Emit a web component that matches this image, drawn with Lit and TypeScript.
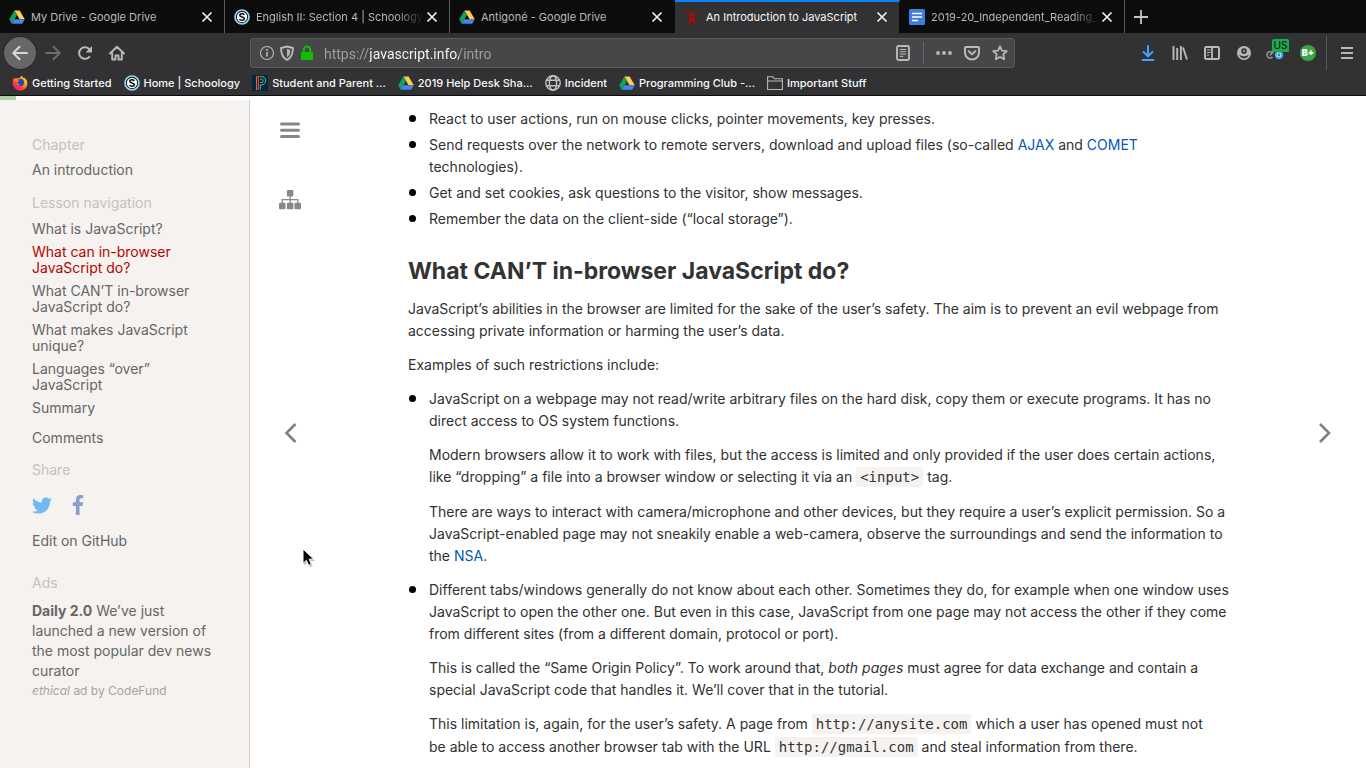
import { LitElement, html, css, svg } from "lit";
import { customElement } from "lit/decorators.js";
import { classMap } from "lit/directives/class-map.js";

const icon = (body: unknown, size = 16, box = "0 0 16 16") =>
  html`<svg width=${size} height=${size} viewBox=${box} aria-hidden="true">${body}</svg>`;

const drive = icon(svg`
  <path d="M5.4 1.5h5.2L15.8 10.300h-5.200z" fill="#ffcf48"/>
  <path d="M5.400 1.500L8 6 2.700 14.800.200 10.300z" fill="#12a15e"/>
  <path d="M5.300 10.300h10.500l-2.600 4.500H2.700z" fill="#4485f0"/>`);

const schoology = icon(svg`
  <circle cx="8" cy="8" r="7" fill="#0b0b0c" stroke="#8ed8f4" stroke-width="1.700"/>
  <circle cx="8" cy="8" r="5.200" fill="#f6f6f6"/>
  <path d="M10.300 5.800C9.800 5 9 4.700 8 4.700c-1.300 0-2.200.6-2.200 1.600 0 2.200 4.600 1.100 4.600 3.300 0 1.100-1 1.700-2.400 1.700-1.100 0-2-.4-2.500-1.300" fill="none" stroke="#0b0b0c" stroke-width="1.500"/>`);

const radio = icon(svg`
  <g fill="none" stroke="#c80000">
    <path d="M4.700 15.500L7.200 6h1.600l2.500 9.500M5.500 12.500l4.500-3M10.500 12.500l-4.500-3" stroke-width="1.100"/>
    <path d="M5.500 3.300L3 1M5 5.300L1.500 4.500M5.200 7.300L3 9.500M10.500 3.300L13 1M11 5.300l3.500-.8M10.800 7.300L13 9.500" stroke-width=".8"/>
  </g><circle cx="8" cy="5" r="1.600" fill="#e00000"/>`);

const docs = icon(svg`
  <rect width="16" height="16" rx="1.500" fill="#3f7de0"/>
  <path d="M3 4.500h10M3 8h10M3 11.500h6" stroke="#fff" stroke-width="1.700"/>`);

const firefox = icon(svg`
  <defs><linearGradient id="fx" x1="1" y1="0" x2=".2" y2="1">
    <stop offset="0" stop-color="#ffe52b"/><stop offset=".45" stop-color="#ff980e"/>
    <stop offset=".75" stop-color="#ff3647"/><stop offset="1" stop-color="#e31587"/></linearGradient></defs>
  <path d="M1.300 3.200L2.600 4.300 4 2.200l.6 1.600C6 3.200 7 3.500 8 2.500L9.500.8c1 .6 1.300 1.300 1.600 2.100l1-.4c2 1.400 3.400 3.500 3.400 6A7.300 7.300 0 0 1 8 15.700 7.300 7.300 0 0 1 .7 8.500c0-2 .2-3.800.6-5.300z" fill="url(#fx)"/>
  <path d="M6.200 4.700C7.500 3.300 10 3.300 11.300 5c1.200 1.600.9 4.300-.6 5.400-1.500 1.200-3.700.9-4.500-.1 1.300.2 2.100-.2 2.600-.8-1.500-.3-3-1-3.400-2.300l1.600-.5z" fill="#2440c4"/>`);

const powerschool = icon(svg`
  <rect width="16" height="16" fill="#06273c"/>
  <path d="M4.500 14.500v-13h1.800v13z" fill="none" stroke="#ea5a3c" stroke-width="1"/>
  <path d="M7.500 1.500h2a3.600 3.600 0 0 1 0 8.400H8.300v4.600" fill="none" stroke="#4fb9ae" stroke-width="1"/>
  <path d="M8 4h1.300a1.800 1.800 0 0 1 0 3.600H8" fill="none" stroke="#cfd65a" stroke-width=".7"/>`);

const globe = icon(svg`
  <g fill="none" stroke="#c3c3c5" stroke-width="1.400"><circle cx="8" cy="8" r="7.200"/>
  <ellipse cx="8" cy="8" rx="3.600" ry="7.200"/><path d="M1.500 5.200h13M1.500 10.800h13"/></g>`);

const folder = icon(svg`
  <path d="M.6 14.500V1.800h5.300L7.400 3.800h8v10.700zM.6 6h14.800" fill="none" stroke="#b9b9bb" stroke-width="1.100"/>`);

const line = (d: string, w = 2) =>
  icon(svg`<path d=${d} fill="none" stroke="currentColor" stroke-width=${w} stroke-linecap="round" stroke-linejoin="round"/>`);

const closeIcon = icon(svg`<path d="M1.500 1.500l9 9M10.500 1.500l-9 9" stroke="currentColor" stroke-width="1.700"/>`, 12, "0 0 12 12");

const tabs = [
  { label: "My Drive - Google Drive", icon: drive },
  { label: "English II: Section 4 | Schoology", icon: schoology, long: true },
  { label: "Antigoné - Google Drive", icon: drive },
  { label: "An Introduction to JavaScript", icon: radio, active: true },
  { label: "2019-20_Independent_Reading_", icon: docs, long: true },
];

const bookmarks = [
  { label: "Getting Started", icon: firefox },
  { label: "Home | Schoology", icon: schoology },
  { label: "Student and Parent ...", icon: powerschool },
  { label: "2019 Help Desk Sha...", icon: drive },
  { label: "Incident", icon: globe },
  { label: "Programming Club -...", icon: drive },
  { label: "Important Stuff", icon: folder },
];

const reset = css`
  * { box-sizing: border-box; }
  button { border: 0; padding: 0; margin: 0; background: none; font: inherit; color: inherit; display: flex; align-items: center; justify-content: center; }
  a { color: inherit; text-decoration: none; }
  svg { display: block; flex: none; }
`;

@customElement("browser-chrome")
export class BrowserChrome extends LitElement {
  static styles = [reset, css`
    :host { display: block; flex: none; background: #323234; color: #f9f9fa; font-family: Inter, "Liberation Sans", sans-serif; border-bottom: 1px solid #0c0c0d; }
    .tabs { display: flex; height: 33px; background: #0c0c0d; font-size: 11px; }
    .tab { display: flex; align-items: center; flex: 0 1 225px; min-width: 0; padding: 0 9px; border-right: 1px solid #5c5c5e; color: #b9b9bb; }
    .tab.active, .tab.before-active { border-right-color: transparent; }
    .tab.active { background: #323234 padding-box; border-top: 2px solid #0a84ff; padding-bottom: 2px; color: #f9f9fa; }
    .tab-label { flex: 1; min-width: 0; gap: 6px; justify-content: flex-start; }
    .tab-label span { flex: 1; text-align: left; white-space: nowrap; overflow: hidden; }
    .tab.long span { mask-image: linear-gradient(to right, #000 calc(100% - 28px), transparent); }
    .close { width: 16px; height: 16px; color: #f0f0f0; }
    .new-tab { width: 32px; color: #c4c4c6; }
    .toolbar { display: flex; align-items: center; height: 40px; padding: 0 3px 0 4px; color: #b9b9bb; }
    .tool { width: 32px; height: 32px; flex: none; }
    .back { border-radius: 50%; background: #67676a; box-shadow: 0 0 0 1px #29292b; color: #d8d8da; margin-right: 1px; }
    .forward { color: #6c6c6e; }
    .spacer { flex: 0 1 117px; }
    .url-bar { flex: 1; min-width: 0; display: flex; align-items: center; height: 30px; padding-left: 6px; background: #474749; border: 1px solid #5a5a5c; border-radius: 3px; }
    .identity { width: 20px; height: 28px; }
    .secure { color: #12bc00; }
    .url { flex: 1; min-width: 0; margin-left: 7px; padding: 2px 0 0; border: 0; outline: 0; font: 14px/20px Roboto, "Liberation Sans", sans-serif; background: linear-gradient(to right, #a0a0a3 46px, #fff 46px, #fff 135px, #a0a0a3 135px); -webkit-background-clip: text; background-clip: text; color: transparent; }
    .page-action { width: 28px; height: 28px; flex: none; }
    .divider { width: 1px; height: 22px; background: #66666a; margin: 0 6px; }
    .download { color: #45a1ff; }
    .menu-divider { width: 1px; height: 34px; background: #5a5a5c; margin: 0 4px 0 2px; }
    .bookmarks { display: flex; align-items: center; gap: 12px; height: 22px; padding: 0 12px 3px; font-size: 11px; font-weight: 500; white-space: nowrap; }
    .bookmarks a { display: flex; align-items: center; gap: 4px; }
  `];

  render() {
    return html`
      <div class="tabs" role="tablist">
        ${tabs.map((t, i) => html`
          <div class=${classMap({ tab: true, long: !!t.long, active: !!t.active, "before-active": !!tabs[i + 1]?.active })}>
            <button class="tab-label" role="tab" aria-selected=${t.active ? "true" : "false"}>${t.icon}<span>${t.label}</span></button>
            <button class="close" aria-label="Close tab">${closeIcon}</button>
          </div>`)}
        <button class="new-tab" aria-label="New tab">${icon(svg`<path d="M8 1v14M1 8h14" stroke="currentColor" stroke-width="1.800"/>`)}</button>
      </div>
      <div class="toolbar">
        <button class="tool back" aria-label="Back">${line("M15 8H1.500M7.500 1.800L1.300 8l6.200 6.200")}</button>
        <button class="tool forward" aria-label="Forward">${line("M1 8h13.500M8.500 1.800L14.700 8l-6.200 6.200")}</button>
        <button class="tool" aria-label="Reload">${icon(svg`<path d="M12.800 11.200A5.800 5.800 0 1 1 12.500 4.500" fill="none" stroke="currentColor" stroke-width="2"/><path d="M15 1v6.500H8.500z" fill="currentColor"/>`)}</button>
        <button class="tool" aria-label="Home">${icon(svg`<path d="M1 8.500L8 1.700l7 6.800M3.200 7.500v7h3.300v-4h3v4h3.300v-7" fill="none" stroke="currentColor" stroke-width="1.900" stroke-linejoin="round" stroke-linecap="round"/>`)}</button>
        <div class="spacer"></div>
        <div class="url-bar">
          <button class="identity" aria-label="Site information">${icon(svg`<circle cx="8" cy="8" r="6.500" fill="none" stroke="currentColor" stroke-width="1.100"/><path d="M8 7v4.500M8 4v1.700" stroke="currentColor" stroke-width="1.600"/>`)}</button>
          <button class="identity" aria-label="Tracking protection">${icon(svg`<path d="M8 1.500L14 3c0 5.500-1.300 9.500-6 12C3.300 12.500 2 8.500 2 3z" fill="none" stroke="currentColor" stroke-width="1.900" stroke-linejoin="round"/><path d="M8 4l3.300.9c-.1 3.500-1 5.800-3.300 7.300z" fill="currentColor"/>`)}</button>
          <button class="identity secure" aria-label="Secure connection">${icon(svg`<rect x="2" y="7" width="12" height="8" rx="1" fill="currentColor"/><path d="M4.800 8V4.800a3.200 3.200 0 0 1 6.400 0V8" fill="none" stroke="currentColor" stroke-width="2"/>`)}</button>
          <input class="url" aria-label="Address" value="https://javascript.info/intro">
          <button class="page-action" aria-label="Reader view">${icon(svg`<rect x="2" y="1" width="12" height="14" rx="1.500" fill="none" stroke="currentColor" stroke-width="1.900"/><path d="M4.800 4.500h6.400M4.800 6.800h6.400M4.800 9.100h6.400M4.800 11.400h3.500" stroke="currentColor" stroke-width="1"/>`)}</button>
          <div class="divider"></div>
          <button class="page-action" aria-label="Page actions">${icon(svg`<g fill="currentColor"><circle cx="2" cy="8" r="1.900"/><circle cx="8" cy="8" r="1.900"/><circle cx="14" cy="8" r="1.900"/></g>`)}</button>
          <button class="page-action" aria-label="Save to Pocket">${line("M2 2h12c.6 0 1 .4 1 1v4.500a7 7 0 0 1-14 0V3c0-.6.400-1 1-1zM4.800 6.300L8 9.400l3.200-3.100")}</button>
          <button class="page-action" aria-label="Bookmark page">${line("M8 1.300l2 4.300 4.800.6-3.500 3.200.9 4.900L8 12l-4.200 2.300.9-4.900L1.200 6.200 6 5.600z", 1.8)}</button>
        </div>
        <div class="spacer"></div>
        <button class="tool download" aria-label="Downloads">${line("M8 1v10M3.500 7L8 11.300 12.500 7M2.500 15h11")}</button>
        <button class="tool" aria-label="Library">${icon(svg`<path d="M1.500 1v14M5.200 3v12M8.900 1v14M11 2.500L15 14.500" fill="none" stroke="currentColor" stroke-width="1.900"/>`)}</button>
        <button class="tool" aria-label="Sidebars">${icon(svg`<rect x="1" y="2" width="14" height="12" rx="1.500" fill="none" stroke="currentColor" stroke-width="2"/><path d="M8 2v12" stroke="currentColor" stroke-width="1.800"/><path d="M3 5h3.500M3 7.500h3.500M3 10h2" stroke="currentColor" stroke-width="1"/>`)}</button>
        <button class="tool" aria-label="Account">${icon(svg`<circle cx="8" cy="8" r="7" fill="currentColor"/><path d="M8 3.200a2.800 2.800 0 0 1 2.800 2.800c0 1.800-1.200 3-2.800 3S5.200 7.800 5.200 6A2.800 2.800 0 0 1 8 3.200z" fill="#323234"/><path d="M3.200 9.200c1.300 1.400 2.800 2 4.800 2s3.500-.6 4.800-2c-.6 2.600-2.300 4-4.800 4s-4.200-1.400-4.800-4z" fill="#323234"/><circle cx="8" cy="6" r="1" fill="currentColor"/>`)}</button>
        <button class="tool" aria-label="Location extension, US">
          <svg width="28" height="28" viewBox="0 0 28 28" aria-hidden="true">
            <path d="M9 15l4-4 4 3" fill="none" stroke="#e8b923" stroke-width="1.500"/>
            <path d="M10.500 13.500a3.200 3.200 0 1 0 0 4.500" fill="none" stroke="#85858a" stroke-width="1.800"/><circle cx="8.500" cy="15.800" r="1" fill="#85858a"/>
            <circle cx="17" cy="16" r="3.300" fill="#f4e9c1" stroke="#35aee8" stroke-width="2"/><circle cx="17" cy="16" r="1.400" fill="#3975c4"/>
            <rect x="10" y="0" width="17" height="13" rx="1.500" fill="#1da851"/>
            <text x="18.500" y="10" text-anchor="middle" font-size="10" font-family="Inter, sans-serif" fill="#0c0c0d">US</text>
          </svg>
        </button>
        <button class="tool" aria-label="Grade extension">${icon(svg`<circle cx="8" cy="8" r="8" fill="#3ea344"/><text x="8" y="11" text-anchor="middle" font-size="9" font-weight="900" font-family="Inter, sans-serif" fill="#fff">B+</text>`)}</button>
        <div class="menu-divider"></div>
        <button class="tool" aria-label="Open menu">${icon(svg`<path d="M2 3h12M2 8h12M2 13h12" stroke="currentColor" stroke-width="2"/>`)}</button>
      </div>
      <nav class="bookmarks" aria-label="Bookmarks">
        ${bookmarks.map((b) => html`<a href="#">${b.icon}<span>${b.label}</span></a>`)}
      </nav>`;
  }
}

@customElement("tutorial-sidebar")
export class TutorialSidebar extends LitElement {
  static styles = [reset, css`
    :host { display: block; width: 250px; flex: none; padding: 37px 32px 0; background: #f5f2f0; border-right: 1px solid #d2cecb; color: #666; font-size: 14px; line-height: 16px; white-space: nowrap; }
    h4 { margin: 0; font-size: 14px; font-weight: 400; color: #c4c2c0; }
    ul { list-style: none; margin: 10px 0 0; padding: 0; display: grid; gap: 7px; }
    a { display: block; }
    .chapter { margin: 9px 0 17px; }
    .current { color: #b20600; }
    .comments { margin: 14px 0 16px; }
    .share { display: flex; gap: 20px; align-items: center; height: 20px; margin: 17px 0 18px; }
    .ads { margin-top: 26px; }
    .ad { margin: 10px 0 0; line-height: 20px; }
    .by { margin: 0; font-size: 12px; line-height: 20px; color: #a6a4a2; }
  `];

  render() {
    return html`
      <h4>Chapter</h4>
      <a class="chapter" href="#">An introduction</a>
      <h4>Lesson navigation</h4>
      <ul>
        <li><a href="#">What is JavaScript?</a></li>
        <li><a class="current" href="#">What can in-browser<br>JavaScript do?</a></li>
        <li><a href="#">What CAN’T in-browser<br>JavaScript do?</a></li>
        <li><a href="#">What makes JavaScript<br>unique?</a></li>
        <li><a href="#">Languages “over”<br>JavaScript</a></li>
        <li><a href="#">Summary</a></li>
      </ul>
      <a class="comments" href="#">Comments</a>
      <h4>Share</h4>
      <div class="share">
        <a href="#" aria-label="Twitter"><svg width="20" height="17" viewBox="108 256 1576 1280"><path fill="#6fbaf2" d="M1684 408q-67 98-162 167 1 14 1 42 0 130-38 259.500t-115.500 248.500-184.500 210.500-258 146-323 54.500q-271 0-496-145 35 4 78 4 225 0 401-138-105-2-188-64.500t-114-159.500q33 5 61 5 43 0 85-11-112-23-185.500-111.500t-73.500-205.500v-4q68 38 146 41-66-44-105-115t-39-154q0-88 44-163 121 149 294.500 238.500t371.500 99.500q-8-38-8-74 0-134 94.500-228.500t228.500-94.500q140 0 236 102 109-21 205-78-37 115-142 178 93-10 186-50z"/></svg></a>
        <a href="#" aria-label="Facebook"><svg width="12" height="20" viewBox="479 0 864 1664"><path fill="#8c9dc8" d="M1343 12v264h-157q-86 0-116 36t-30 108v189h293l-39 296h-254v759h-306v-759h-255v-296h255v-218q0-186 104-288.500t277-102.500q147 0 228 12z"/></svg></a>
      </div>
      <a href="#">Edit on GitHub</a>
      <h4 class="ads">Ads</h4>
      <p class="ad"><b>Daily 2.0</b> We’ve just<br>launched a new version of<br>the most popular dev news<br>curator</p>
      <p class="by"><em>ethical</em> ad by CodeFund</p>`;
  }
}

@customElement("tutorial-article")
export class TutorialArticle extends LitElement {
  static styles = [reset, css`
    :host { display: block; width: 100%; max-width: 800px; margin: 0 auto; padding-top: 8px; color: #313130; font-size: 14px; line-height: 22px; white-space: nowrap; }
    h2 { margin: 26px 0 12px; font-size: 23px; line-height: 30px; font-weight: 700; color: #333; }
    p { margin: 0 0 12px; }
    ul { list-style: none; margin: 0; padding: 0; display: grid; gap: 4px; }
    ul.loose { gap: 0; }
    li { display: grid; grid-template-columns: 8px 1fr; column-gap: 13px; }
    li::before { content: ""; width: 7px; height: 7px; margin: 7px 0 0 1px; border-radius: 50%; background: #000; }
    a { color: #0059b2; }
    code { font: 14px/23px "DejaVu Sans Mono", monospace; padding: 2px 4px; border-radius: 2px; background: #f5f2f0; color: #333; }
  `];

  render() {
    return html`
      <ul>
        <li><div>React to user actions, run on mouse clicks, pointer movements, key presses.</div></li>
        <li><div>Send requests over the network to remote servers, download and upload files (so-called <a href="#">AJAX</a> and <a href="#">COMET</a><br>technologies).</div></li>
        <li><div>Get and set cookies, ask questions to the visitor, show messages.</div></li>
        <li><div>Remember the data on the client-side (“local storage”).</div></li>
      </ul>
      <h2>What CAN’T in-browser JavaScript do?</h2>
      <p>JavaScript’s abilities in the browser are limited for the sake of the user’s safety. The aim is to prevent an evil webpage from<br>accessing private information or harming the user’s data.</p>
      <p>Examples of such restrictions include:</p>
      <ul class="loose">
        <li><div>
          <p>JavaScript on a webpage may not read/write arbitrary files on the hard disk, copy them or execute programs. It has no<br>direct access to OS system functions.</p>
          <p>Modern browsers allow it to work with files, but the access is limited and only provided if the user does certain actions,<br>like “dropping” a file into a browser window or selecting it via an <code>&lt;input&gt;</code> tag.</p>
          <p>There are ways to interact with camera/microphone and other devices, but they require a user’s explicit permission. So a<br>JavaScript-enabled page may not sneakily enable a web-camera, observe the surroundings and send the information to<br>the <a href="#">NSA</a>.</p>
        </div></li>
        <li><div>
          <p>Different tabs/windows generally do not know about each other. Sometimes they do, for example when one window uses<br>JavaScript to open the other one. But even in this case, JavaScript from one page may not access the other if they come<br>from different sites (from a different domain, protocol or port).</p>
          <p>This is called the “Same Origin Policy”. To work around that, <em>both pages</em> must agree for data exchange and contain a<br>special JavaScript code that handles it. We’ll cover that in the tutorial.</p>
          <p>This limitation is, again, for the user’s safety. A page from <code>http://anysite.com</code> which a user has opened must not<br>be able to access another browser tab with the URL <code>http://gmail.com</code> and steal information from there.</p>
        </div></li>
      </ul>`;
  }
}

@customElement("app-root")
export class AppRoot extends LitElement {
  static styles = [reset, css`
    :host { display: flex; flex-direction: column; height: 100vh; overflow: hidden; position: relative; background: #fff; font-family: Inter, "Liberation Sans", sans-serif; }
    .progress { flex: none; height: 4px; }
    .progress-bar { width: 16px; height: 4px; background: #b3cfa8; }
    .page { flex: 1; min-height: 0; display: flex; }
    .rail { width: 80px; flex: none; display: grid; grid-template-rows: 1fr auto 1fr; justify-items: center; color: #888; }
    .rail-top { display: grid; gap: 48px; align-content: start; padding-top: 19px; }
    .arrow { grid-row: 2; padding-bottom: 2px; }
    .content { flex: 1; min-width: 0; }
    .pointer { position: absolute; left: 300px; top: 547px; }
  `];

  render() {
    return html`
      <browser-chrome></browser-chrome>
      <div class="progress"><div class="progress-bar"></div></div>
      <div class="page">
        <tutorial-sidebar></tutorial-sidebar>
        <div class="rail">
          <div class="rail-top">
            <button aria-label="Toggle sidebar">${icon(svg`<path d="M2.500 5h17M2.500 11.200h17M2.500 17.400h17" stroke="currentColor" stroke-width="3" stroke-linecap="round"/>`, 22, "0 0 22 22")}</button>
            <button aria-label="Tutorial map">${icon(svg`<g fill="currentColor"><rect x="7.900" y="1" width="6.500" height="6.500" rx="1"/><rect x="0" y="13.700" width="6.500" height="6.500" rx="1"/><rect x="7.900" y="13.700" width="6.500" height="6.500" rx="1"/><rect x="15.500" y="13.700" width="6.500" height="6.500" rx="1"/></g><path d="M11.200 7v7M3.200 14v-3.300h15.600V14" fill="none" stroke="currentColor" stroke-width="1.300"/>`, 22, "0 0 22 22")}</button>
          </div>
          <button class="arrow" aria-label="Previous lesson">${icon(svg`<path d="M16.500 2L7.500 11l9 9" fill="none" stroke="#808080" stroke-width="2.600"/>`, 22, "0 0 22 22")}</button>
        </div>
        <div class="content"><tutorial-article></tutorial-article></div>
        <div class="rail">
          <button class="arrow" aria-label="Next lesson">${icon(svg`<path d="M5 2l9 9-9 9" fill="none" stroke="#808080" stroke-width="2.600"/>`, 22, "0 0 22 22")}</button>
        </div>
      </div>
      <svg class="pointer" width="18" height="24" viewBox="0 0 18 24" aria-hidden="true">
        <path d="M4 3.500v15l3.500-3.300 2.300 5 3-1.400-2.300-4.800h4.800z" fill="#000" opacity=".25"/>
        <path d="M3 2v14.500l3.400-3.200 2.300 5.100 2.700-1.200-2.300-5h4.700z" fill="#000" stroke="#fff" stroke-width="1"/>
      </svg>`;
  }
}
